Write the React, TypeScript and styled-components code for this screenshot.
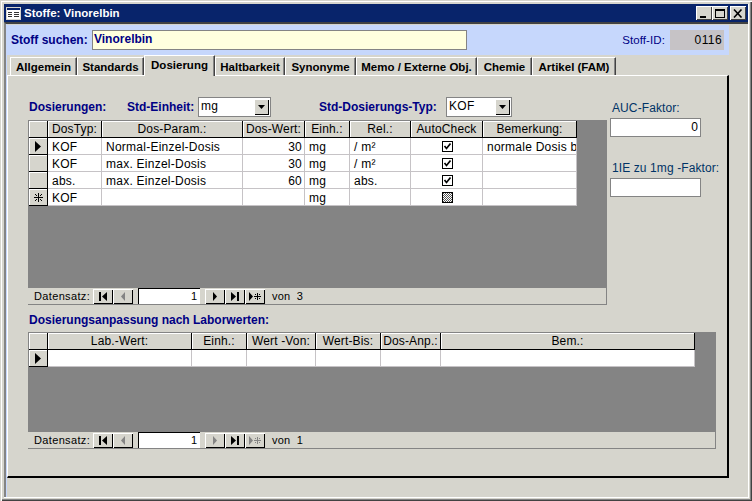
import styled, { createGlobalStyle } from "styled-components"

// Data //

const FACE = "#d6d5cd"
const SHADOW = "#848484"
const GRIDLINE = "#c6c3c6"
const NAVY = "#000084"
const CAPTION = "#08246b"
const PALE_BLUE = "#c6d7fc"

const doseColumns = [19, 54, 141, 62, 45, 61, 72, 94]
const labColumns = [19, 144, 55, 69, 65, 60, 254]

const tabs = ["Allgemein", "Standards", "Dosierung", "Haltbarkeit", "Synonyme", "Memo / Externe Obj.", "Chemie", "Artikel (FAM)"]
const tabWidths = [67, 67, 71, 70, 71, 121, 55, 84]

const doseHeaders = ["DosTyp:", "Dos-Param.:", "Dos-Wert:", "Einh.:", "Rel.:", "AutoCheck", "Bemerkung:"]
const labHeaders = ["Lab.-Wert:", "Einh.:", "Wert -Von:", "Wert-Bis:", "Dos-Anp.:", "Bem.:"]

const doseRows = [
	{ marker: "current", typ: "KOF", param: "Normal-Einzel-Dosis", wert: "30", einh: "mg", rel: "/ m²", check: "on", note: "normale Dosis b" },
	{ marker: "", typ: "KOF", param: "max. Einzel-Dosis", wert: "30", einh: "mg", rel: "/ m²", check: "on", note: "" },
	{ marker: "", typ: "abs.", param: "max. Einzel-Dosis", wert: "60", einh: "mg", rel: "abs.", check: "on", note: "" },
	{ marker: "new", typ: "KOF", param: "", wert: "", einh: "mg", rel: "", check: "mixed", note: "" }
]

// Components //

const Marker = ({ kind }: { kind: string }) => (
	<RowMarker>
		{kind === "current" && (
			<svg width="9" height="11" viewBox="0 0 9 11">
				<path d="M1 0 L7 5.5 L1 11 Z" fill="#000" />
			</svg>
		)}
		{kind === "new" && (
			<svg width="9" height="9" viewBox="0 0 9 9">
				<path d="M4 0h1v9H4zM0 4h9v1H0zM1 1h1v1H1zM7 1h1v1H7zM1 7h1v1H1zM7 7h1v1H7zM2 2h1v1H2zM6 2h1v1H6zM2 6h1v1H2zM6 6h1v1H6z" fill="#000" />
			</svg>
		)}
	</RowMarker>
)

const CheckMark = ({ state }: { state: string }) => (
	<svg width="11" height="11" viewBox="0 0 11 11">
		<defs>
			<pattern id="dither" width="2" height="2" patternUnits="userSpaceOnUse">
				<rect width="2" height="2" fill="#fff" />
				<rect width="1" height="1" fill="#555" />
				<rect x="1" y="1" width="1" height="1" fill="#555" />
			</pattern>
		</defs>
		<rect x="0.5" y="0.5" width="10" height="10" fill={state === "mixed" ? "url(#dither)" : "#fff"} stroke="#000" />
		{state === "on" && <path d="M2.5 5 L4.5 7.5 L8.5 2.5" fill="none" stroke="#000" strokeWidth="1.7" />}
	</svg>
)

const NavGlyph = ({ kind, off }: { kind: string; off?: boolean }) => {
	const ink = off ? SHADOW : "#000"
	return (
		<svg width="14" height="9" viewBox="0 0 14 9">
			{kind === "first" && <path d="M3 0h2v9H3zM11 0v9L6 4.5z" fill={ink} />}
			{kind === "prev" && <path d="M9 0v9L5 4.5z" fill={ink} />}
			{kind === "next" && <path d="M5 0v9l4-4.5z" fill={ink} />}
			{kind === "last" && <path d="M3 0v9l5-4.5zM9 0h2v9H9z" fill={ink} />}
			{kind === "new" && (
				<path d="M1 0v9l4-4.5zM9 1h1v7H9zM6 4h7v1H6zM7 2h1v1H7zM11 2h1v1h-1zM7 6h1v1H7zM11 6h1v1h-1z" fill={ink} />
			)}
		</svg>
	)
}

const RecordNav = ({ total, nextOff }: { total: string; nextOff?: boolean }) => (
	<NavBar>
		<NavLabel>Datensatz:</NavLabel>
		<NavButton><NavGlyph kind="first" /></NavButton>
		<NavButton><NavGlyph kind="prev" off /></NavButton>
		<NavInput>1</NavInput>
		<NavButton><NavGlyph kind="next" off={nextOff} /></NavButton>
		<NavButton><NavGlyph kind="last" /></NavButton>
		<NavButton><NavGlyph kind="new" off={nextOff} /></NavButton>
		<NavCount>von&nbsp; {total}</NavCount>
	</NavBar>
)

const Dropdown = ({ value, width }: { value: string; width: number }) => (
	<Select $width={width}>
		<SelectValue>{value}</SelectValue>
		<SelectArrow>
			<svg width="7" height="4" viewBox="0 0 7 4">
				<path d="M0 0h7L3.5 4z" fill="#000" />
			</svg>
		</SelectArrow>
	</Select>
)

export default function App() {
	return (
		<>
			<GlobalStyle />
			<Window>
				<Frame>
					<TitleBar>
						<TitleIcon>
							<svg width="15" height="13" viewBox="0 0 15 13">
								<rect x="0.5" y="0.5" width="14" height="12" fill="#fff" stroke={FACE} />
								<rect x="1" y="1" width="13" height="2" fill={CAPTION} />
								<path d="M2 5h4v1H2zM8 5h5v1H8zM2 7h4v1H2zM8 7h5v1H8zM2 9h4v1H2zM8 9h5v1H8z" fill="#333" />
							</svg>
						</TitleIcon>
						<TitleText>Stoffe: Vinorelbin</TitleText>
						<WindowButton>
							<svg width="10" height="9" viewBox="0 0 10 9"><path d="M1 7h6v2H1z" fill="#000" /></svg>
						</WindowButton>
						<WindowButton>
							<svg width="10" height="9" viewBox="0 0 10 9"><path d="M0 0h10v9H0zM1 2v6h8V2z" fill="#000" fillRule="evenodd" /></svg>
						</WindowButton>
						<CloseButton>
							<svg width="10" height="9" viewBox="0 0 10 9"><path d="M1 0.5L8.5 8.5M8.5 0.5L1 8.5" stroke="#000" strokeWidth="1.6" /></svg>
						</CloseButton>
					</TitleBar>
					<Body>
						<SearchBar>
							<SearchLabel>Stoff suchen:</SearchLabel>
							<SearchInput>Vinorelbin</SearchInput>
							<IdLabel>Stoff-ID:</IdLabel>
							<IdValue>0116</IdValue>
						</SearchBar>
						<TabStrip>
							{tabs.map((tab, i) => (
								<Tab key={tab} $width={tabWidths[i]} $active={tab === "Dosierung"}>
									{tab}
								</Tab>
							))}
						</TabStrip>
						<TabPage>
							<TopSection>
								<MainColumn>
									<Toolbar>
										<Heading $width={98}>Dosierungen:</Heading>
										<Heading $width={71}>Std-Einheit:</Heading>
										<Dropdown value="mg" width={73} />
										<Heading $width={127} $gap={48}>Std-Dosierungs-Typ:</Heading>
										<Dropdown value="KOF" width={66} />
									</Toolbar>
									<Subform $width={579} $height={185}>
										<Sheet $columns={doseColumns}>
											<CornerCell />
											{doseHeaders.map((h) => (
												<HeaderCell key={h}>{h}</HeaderCell>
											))}
											{doseRows.map((row, i) => (
												<DoseRow key={i} row={row} />
											))}
										</Sheet>
										<RecordNav total="3" />
									</Subform>
								</MainColumn>
								<SideColumn>
									<FieldLabel>AUC-Faktor:</FieldLabel>
									<FieldInput>0</FieldInput>
									<FieldLabel $gap={24}>1IE zu 1mg -Faktor:</FieldLabel>
									<FieldInput />
								</SideColumn>
							</TopSection>
							<SectionHeading>Dosierungsanpassung nach Laborwerten:</SectionHeading>
							<Subform $width={688} $height={117}>
								<Sheet $columns={labColumns}>
									<CornerCell />
									{labHeaders.map((h) => (
										<HeaderCell key={h}>{h}</HeaderCell>
									))}
									<Marker kind="current" />
									{labHeaders.map((h) => (
										<DataCell key={h} />
									))}
								</Sheet>
								<RecordNav total="1" nextOff />
							</Subform>
						</TabPage>
						<StatusBar />
					</Body>
				</Frame>
			</Window>
		</>
	)
}

const DoseRow = ({ row }: { row: (typeof doseRows)[number] }) => (
	<>
		<Marker kind={row.marker} />
		<DataCell>{row.typ}</DataCell>
		<DataCell>{row.param}</DataCell>
		<DataCell $right>{row.wert}</DataCell>
		<DataCell>{row.einh}</DataCell>
		<DataCell>{row.rel}</DataCell>
		<DataCell $center>
			<CheckMark state={row.check} />
		</DataCell>
		<DataCell>{row.note}</DataCell>
	</>
)

// Styled Components //

const GlobalStyle = createGlobalStyle`
	html, body {
		margin: 0;
		padding: 0;
		background: ${FACE};
	}
	* {
		box-sizing: border-box;
	}
`

const Window = styled.div`
	width: 752px;
	height: 501px;
	padding: 4px 3px 3px 4px;
	background: ${FACE};
	overflow: hidden;
	font-family: "Liberation Sans", Arial, sans-serif;
	font-size: 12px;
	color: #000;
	box-shadow: inset 1px 1px 0 ${FACE}, inset 2px 2px 0 #fff, inset -1px -1px 0 #424242, inset -2px -2px 0 ${SHADOW};
`

const Frame = styled.div`
	height: 100%;
	display: flex;
	flex-direction: column;
	border-right: 1px solid #fff;
	border-bottom: 1px solid #fff;
`

const TitleBar = styled.div`
	height: 18px;
	flex: none;
	display: flex;
	align-items: center;
	padding: 0 2px;
	background: ${CAPTION};
	color: #fff;
`

const TitleIcon = styled.span`
	display: flex;
	margin-right: 3px;
`

const TitleText = styled.span`
	flex: 1;
	font-size: 11.5px;
	font-weight: 700;
`

const WindowButton = styled.span`
	width: 16px;
	height: 14px;
	display: flex;
	align-items: center;
	justify-content: center;
	background: ${FACE};
	box-shadow: inset 1px 1px 0 #fff, inset -1px -1px 0 #424242;
`

const CloseButton = styled(WindowButton)`
	margin-left: 2px;
`

const Body = styled.div`
	flex: 1;
	min-height: 0;
	display: flex;
	flex-direction: column;
	padding: 1px 19px 0 0;
	border-top: 2px solid #424242;
	border-left: 2px solid ${SHADOW};
	box-shadow: inset 1px 0 0 ${PALE_BLUE};
`

const SearchBar = styled.div`
	height: 30px;
	flex: none;
	margin-left: 1px;
	display: flex;
	align-items: center;
	padding: 0 5px 0 4px;
	background: ${PALE_BLUE};
`

const SearchLabel = styled.span`
	width: 81px;
	font-weight: 700;
	color: ${NAVY};
`

const SearchInput = styled.div`
	width: 375px;
	height: 20px;
	padding-left: 1px;
	line-height: 17px;
	background: #ffffde;
	border: 1px solid ${SHADOW};
	font-weight: 700;
	color: ${NAVY};
`

const IdLabel = styled.span`
	margin-left: auto;
	margin-right: 5px;
	font-size: 11.5px;
	color: ${NAVY};
	letter-spacing: 0.1px;
`

const IdValue = styled.div`
	width: 54px;
	height: 20px;
	padding-right: 2px;
	line-height: 20px;
	text-align: right;
	background: ${GRIDLINE};
	color: #000;
	letter-spacing: 0.4px;
`

const TabStrip = styled.div`
	height: 20px;
	flex: none;
	margin-left: 1px;
	display: flex;
	align-items: flex-end;
	padding-left: 3px;
`

const Tab = styled.div<{ $width: number; $active?: boolean }>`
	position: relative;
	z-index: ${({ $active }) => ($active ? 1 : 0)};
	width: ${({ $width }) => $width}px;
	height: ${({ $active }) => ($active ? "21px" : "18px")};
	margin-bottom: ${({ $active }) => ($active ? "-1px" : "0")};
	padding-bottom: ${({ $active }) => ($active ? "3px" : "0")};
	display: flex;
	align-items: center;
	justify-content: center;
	white-space: nowrap;
	font-size: 11.5px;
	font-weight: 700;
	background: ${FACE};
	border-top: 1px solid #fff;
	border-left: 1px solid #fff;
	border-right: 1px solid #424242;
	box-shadow: inset -1px 0 0 ${SHADOW};
`

const TabPage = styled.div`
	flex: 1;
	min-height: 0;
	margin-left: 1px;
	padding: 21px 0 0 20px;
	background: ${FACE};
	border-top: 1px solid #fff;
	border-left: 1px solid #fff;
	border-right: 2px solid #000;
	border-bottom: 2px solid #000;
`

const StatusBar = styled.div`
	height: 19px;
	flex: none;
`

const TopSection = styled.div`
	display: flex;
	align-items: flex-start;
`

const MainColumn = styled.div`
	display: flex;
	flex-direction: column;
	gap: 3px;
`

const SideColumn = styled.div`
	width: 91px;
	margin-left: 3px;
	padding-top: 4px;
	display: flex;
	flex-direction: column;
`

const Toolbar = styled.div`
	height: 20px;
	padding-left: 1px;
	display: flex;
	align-items: center;
`

const Heading = styled.span<{ $width: number; $gap?: number }>`
	width: ${({ $width }) => $width}px;
	margin-left: ${({ $gap = 0 }) => $gap}px;
	white-space: nowrap;
	font-weight: 700;
	color: ${NAVY};
`

const SectionHeading = styled.div`
	height: 14px;
	margin: 8px 0 5px;
	padding-left: 1px;
	line-height: 14px;
	font-weight: 700;
	color: ${NAVY};
`

const Select = styled.div<{ $width: number }>`
	width: ${({ $width }) => $width}px;
	height: 20px;
	display: flex;
	align-items: stretch;
	padding: 1px;
	background: #fff;
	border: 1px solid ${SHADOW};
`

const SelectValue = styled.span`
	flex: 1;
	padding-left: 1px;
	line-height: 15px;
	letter-spacing: 0.3px;
`

const SelectArrow = styled.span`
	width: 15px;
	display: flex;
	align-items: center;
	justify-content: center;
	background: ${FACE};
	box-shadow: inset 1px 1px 0 #fff, inset -1px -1px 0 #000;
`

const Subform = styled.div<{ $width: number; $height: number }>`
	width: ${({ $width }) => $width}px;
	height: ${({ $height }) => $height}px;
	display: flex;
	flex-direction: column;
	background: ${SHADOW};
`

const Sheet = styled.div<{ $columns: number[] }>`
	flex: 1;
	min-height: 0;
	display: grid;
	grid-template-columns: ${({ $columns }) => $columns.map((c) => `${c}px`).join(" ")};
	grid-auto-rows: 17px;
	align-content: start;
	padding: 1px 0 0 1px;
`

const CornerCell = styled.div`
	background: ${FACE};
	border-right: 1px solid #000;
	border-bottom: 1px solid #000;
	box-shadow: inset 1px 1px 0 #fff;
`

const HeaderCell = styled(CornerCell)`
	padding-top: 1px;
	text-align: center;
	line-height: 14px;
	white-space: nowrap;
	overflow: hidden;
	letter-spacing: 0.15px;
`

const RowMarker = styled.div`
	display: flex;
	align-items: center;
	justify-content: center;
	background: ${FACE};
	border-right: 1px solid #000;
	border-bottom: 1px solid #000;
	box-shadow: inset 1px 1px 0 #fff;
`

const DataCell = styled.div<{ $right?: boolean; $center?: boolean }>`
	display: flex;
	align-items: center;
	justify-content: ${({ $right, $center }) => ($right ? "flex-end" : $center ? "center" : "flex-start")};
	padding: 1px 2px 0 4px;
	white-space: nowrap;
	overflow: hidden;
	letter-spacing: 0.25px;
	background: #fff;
	border-right: 1px solid ${GRIDLINE};
	border-bottom: 1px solid ${GRIDLINE};
`

const NavBar = styled.div`
	height: 17px;
	flex: none;
	display: flex;
	align-items: center;
	padding-left: 6px;
	background: ${FACE};
	border-right: 1px solid ${SHADOW};
	border-bottom: 1px solid ${SHADOW};
`

const NavLabel = styled.span`
	width: 59px;
	font-size: 11px;
	letter-spacing: 0.35px;
`

const NavButton = styled.span`
	width: 20px;
	height: 15px;
	display: flex;
	align-items: center;
	justify-content: center;
	background: ${FACE};
	box-shadow: inset 1px 1px 0 #fff, inset -1px -1px 0 #000;
`

const NavInput = styled.div`
	width: 62px;
	height: 16px;
	margin: 0 5px;
	padding-right: 3px;
	line-height: 15px;
	text-align: right;
	font-size: 11px;
	color: #000;
	background: #fff;
	border-top: 1px solid #000;
	border-left: 1px solid #000;
`

const NavCount = styled.span`
	margin-left: 7px;
	font-size: 11px;
	letter-spacing: 0.2px;
`

const FieldLabel = styled.div<{ $gap?: number }>`
	height: 14px;
	margin-top: ${({ $gap = 0 }) => $gap}px;
	margin-bottom: 3px;
	padding-left: 2px;
	line-height: 14px;
	white-space: nowrap;
	color: #003366;
	letter-spacing: 0.1px;
`

const FieldInput = styled.div`
	width: 91px;
	height: 19px;
	padding-right: 2px;
	line-height: 17px;
	text-align: right;
	background: #fff;
	border: 1px solid ${SHADOW};
`
